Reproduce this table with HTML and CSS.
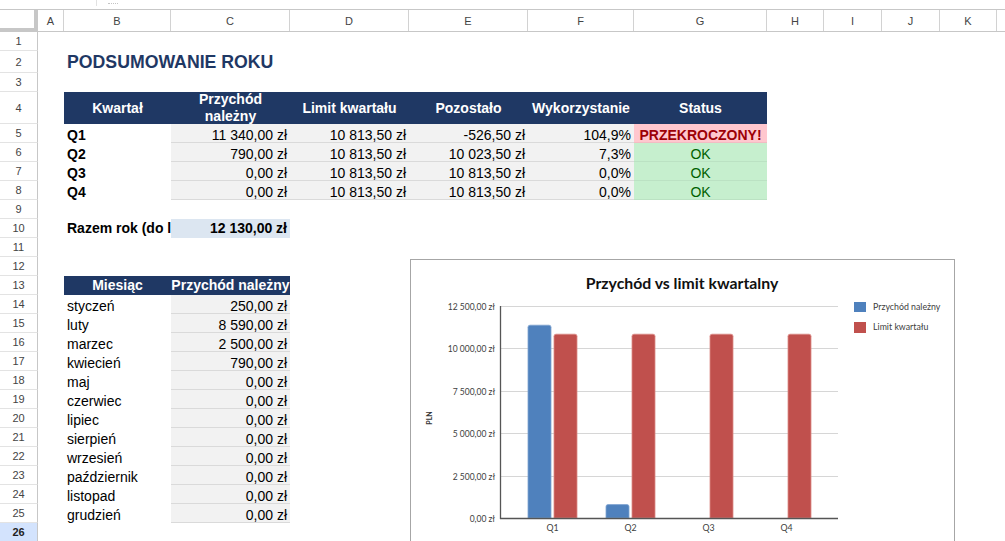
FILE: index.html
```html
<!DOCTYPE html>
<html lang="pl">
<head>
<meta charset="utf-8">
<title>Podsumowanie roku</title>
<link rel="stylesheet" href="styles.css">
</head>
<body>
<div class="app">
  <div class="topbar"><span class="tb-sep"></span><span class="tb-mark"></span></div>
  <div class="sheet">
    <div class="row colhdr">
      <div class="corner"></div>
      <div class="ch">A</div><div class="ch">B</div><div class="ch">C</div><div class="ch">D</div>
      <div class="ch">E</div><div class="ch">F</div><div class="ch">G</div><div class="ch">H</div>
      <div class="ch">I</div><div class="ch">J</div><div class="ch">K</div><div class="ch"></div>
    </div>
    <div class="row"><div class="rh">1</div></div>
    <div class="row r2"><div class="rh">2</div><div class="cell cB title">PODSUMOWANIE ROKU</div></div>
    <div class="row"><div class="rh">3</div></div>
    <div class="row r4">
      <div class="rh">4</div>
      <div class="cell cB hd">Kwartał</div>
      <div class="cell cC hd">Przychód<br>należny</div>
      <div class="cell cD hd">Limit kwartału</div>
      <div class="cell cE hd">Pozostało</div>
      <div class="cell cF hd">Wykorzystanie</div>
      <div class="cell cG hd">Status</div>
    </div>
    <div class="row">
      <div class="rh">5</div>
      <div class="cell cB lbl">Q1</div>
      <div class="cell cC num">11 340,00 zł</div>
      <div class="cell cD num">10 813,50 zł</div>
      <div class="cell cE num">-526,50 zł</div>
      <div class="cell cF num">104,9%</div>
      <div class="cell cG bad">PRZEKROCZONY!</div>
    </div>
    <div class="row">
      <div class="rh">6</div>
      <div class="cell cB lbl">Q2</div>
      <div class="cell cC num">790,00 zł</div>
      <div class="cell cD num">10 813,50 zł</div>
      <div class="cell cE num">10 023,50 zł</div>
      <div class="cell cF num">7,3%</div>
      <div class="cell cG ok">OK</div>
    </div>
    <div class="row">
      <div class="rh">7</div>
      <div class="cell cB lbl">Q3</div>
      <div class="cell cC num">0,00 zł</div>
      <div class="cell cD num">10 813,50 zł</div>
      <div class="cell cE num">10 813,50 zł</div>
      <div class="cell cF num">0,0%</div>
      <div class="cell cG ok">OK</div>
    </div>
    <div class="row">
      <div class="rh">8</div>
      <div class="cell cB lbl">Q4</div>
      <div class="cell cC num">0,00 zł</div>
      <div class="cell cD num">10 813,50 zł</div>
      <div class="cell cE num">10 813,50 zł</div>
      <div class="cell cF num">0,0%</div>
      <div class="cell cG ok">OK</div>
    </div>
    <div class="row"><div class="rh">9</div></div>
    <div class="row">
      <div class="rh">10</div>
      <div class="cell cB tlabel">Razem rok (do l</div>
      <div class="cell cC total">12 130,00 zł</div>
    </div>
    <div class="row"><div class="rh">11</div></div>
    <div class="row"><div class="rh">12</div></div>
    <div class="row">
      <div class="rh">13</div>
      <div class="cell cB hd">Miesiąc</div>
      <div class="cell cC hd tight">Przychód należny</div>
    </div>
    <div class="row"><div class="rh">14</div><div class="cell cB">styczeń</div><div class="cell cC num">250,00 zł</div></div>
    <div class="row"><div class="rh">15</div><div class="cell cB">luty</div><div class="cell cC num">8 590,00 zł</div></div>
    <div class="row"><div class="rh">16</div><div class="cell cB">marzec</div><div class="cell cC num">2 500,00 zł</div></div>
    <div class="row"><div class="rh">17</div><div class="cell cB">kwiecień</div><div class="cell cC num">790,00 zł</div></div>
    <div class="row"><div class="rh">18</div><div class="cell cB">maj</div><div class="cell cC num">0,00 zł</div></div>
    <div class="row"><div class="rh">19</div><div class="cell cB">czerwiec</div><div class="cell cC num">0,00 zł</div></div>
    <div class="row"><div class="rh">20</div><div class="cell cB">lipiec</div><div class="cell cC num">0,00 zł</div></div>
    <div class="row"><div class="rh">21</div><div class="cell cB">sierpień</div><div class="cell cC num">0,00 zł</div></div>
    <div class="row"><div class="rh">22</div><div class="cell cB">wrzesień</div><div class="cell cC num">0,00 zł</div></div>
    <div class="row"><div class="rh">23</div><div class="cell cB">październik</div><div class="cell cC num">0,00 zł</div></div>
    <div class="row"><div class="rh">24</div><div class="cell cB">listopad</div><div class="cell cC num">0,00 zł</div></div>
    <div class="row"><div class="rh">25</div><div class="cell cB">grudzień</div><div class="cell cC num">0,00 zł</div></div>
    <div class="row"><div class="rh sel">26</div></div>
  </div>

  <div class="chart">
    <svg class="chart-svg" width="543" height="300" viewBox="0 0 543 300">
      <text class="c-title" x="271" y="28.5" text-anchor="middle">Przychód vs limit kwartalny</text>
      <g class="c-grid">
        <line x1="89" y1="46.5" x2="427" y2="46.5"/>
        <line x1="89" y1="88.5" x2="427" y2="88.5"/>
        <line x1="89" y1="131.5" x2="427" y2="131.5"/>
        <line x1="89" y1="173.5" x2="427" y2="173.5"/>
        <line x1="89" y1="216.5" x2="427" y2="216.5"/>
      </g>
      <g class="c-blue">
        <path d="M117 258 V67.2 Q117 65.2 119 65.2 H138 Q140 65.2 140 67.2 V258 Z"/>
        <path d="M195 258 V246.6 Q195 244.6 197 244.6 H216 Q218 244.6 218 246.6 V258 Z"/>
      </g>
      <g class="c-red">
        <path d="M143 258 V76.2 Q143 74.2 145 74.2 H164 Q166 74.2 166 76.2 V258 Z"/>
        <path d="M221 258 V76.2 Q221 74.2 223 74.2 H242 Q244 74.2 244 76.2 V258 Z"/>
        <path d="M299 258 V76.2 Q299 74.2 301 74.2 H320 Q322 74.2 322 76.2 V258 Z"/>
        <path d="M377 258 V76.2 Q377 74.2 379 74.2 H398 Q400 74.2 400 76.2 V258 Z"/>
      </g>
      <g class="c-axis">
        <line x1="89.5" y1="46" x2="89.5" y2="259"/>
        <line x1="89" y1="258.5" x2="427" y2="258.5"/>
      </g>
      <g class="c-ylab">
        <text x="84" y="50">12 500,00 zł</text>
        <text x="84" y="92">10 000,00 zł</text>
        <text x="84" y="135">7 500,00 zł</text>
        <text x="84" y="177">5 000,00 zł</text>
        <text x="84" y="219.5">2 500,00 zł</text>
        <text x="84" y="261.5">0,00 zł</text>
      </g>
      <text class="c-pln" transform="translate(21 158) rotate(-90)" text-anchor="middle">PLN</text>
      <g class="c-xlab">
        <text x="141.5" y="271">Q1</text>
        <text x="219.5" y="271">Q2</text>
        <text x="297.5" y="271">Q3</text>
        <text x="375.5" y="271">Q4</text>
      </g>
      <rect class="lg-blue" x="443" y="42" width="12" height="10"/>
      <rect class="lg-red" x="443" y="62" width="12" height="11"/>
      <text class="c-leg" x="462" y="50">Przychód należny</text>
      <text class="c-leg" x="462" y="70">Limit kwartału</text>
    </svg>
  </div>
</div>
</body>
</html>
```

FILE: styles.css
```css
* {
  box-sizing: border-box;
  margin: 0;
  padding: 0;
}

html, body {
  width: 1005px;
  height: 541px;
  overflow: hidden;
  background: #fff;
}

body {
  font-family: "Liberation Sans", Arial, sans-serif;
  color: #000;
}

.app {
  position: relative;
  width: 1005px;
  height: 541px;
  overflow: hidden;
}

/* remnant of the formula bar */
.topbar {
  height: 9px;
  display: flex;
  align-items: flex-start;
}

.tb-sep {
  margin-left: 96px;
  width: 1px;
  height: 6px;
  background: #e2e2e2;
}

.tb-mark {
  margin-left: 11px;
  width: 10px;
  height: 3px;
  margin-top: 1px;
  border-bottom: 1px dotted #c4c4c4;
}

.sheet {
  width: 1054px;
}

.row {
  display: grid;
  grid-template-columns: 38px 26px 107px 119px 119px 119px 106px 133px 57px 58px 58px 57px 57px;
  height: 19px;
}

.r2 { height: 22px; }
.r4 { height: 32px; }

.colhdr {
  height: 23px;
  border-top: 1px solid #c7c7c7;
  border-bottom: 1px solid #c7c7c7;
}

.corner {
  border-right: 4px solid #c7c7c7;
  border-bottom: 3px solid #c7c7c7;
}

.ch {
  display: flex;
  align-items: center;
  justify-content: center;
  border-right: 1px solid #d2d2d2;
  font-size: 11px;
  color: #444;
}

.rh {
  grid-column: 1;
  display: flex;
  align-items: center;
  justify-content: center;
  border-right: 1px solid #c7c7c7;
  border-bottom: 1px solid #e3e3e3;
  font-size: 11px;
  color: #444;
}

.rh.sel {
  background: #d3e3fd;
  font-weight: bold;
  color: #1f1f1f;
}

.cell {
  grid-row: 1;
  display: flex;
  align-items: flex-end;
  padding: 0 3px;
  font-size: 14px;
  line-height: 15px;
  white-space: nowrap;
  overflow: hidden;
}

.cB { grid-column: 3; }
.cC { grid-column: 4; }
.cD { grid-column: 5; }
.cE { grid-column: 6; }
.cF { grid-column: 7; }
.cG { grid-column: 8; }

.title {
  overflow: visible;
  align-items: center;
  font-size: 17.7px;
  line-height: 20px;
  font-weight: bold;
  color: #1f3864;
}

.hd {
  background: #1f3864;
  color: #fff;
  font-weight: bold;
  justify-content: center;
  align-items: center;
  text-align: center;
  line-height: 17px;
}

.hd.tight {
  padding: 0;
}

.lbl {
  font-weight: bold;
}

.num {
  background: #f2f2f2;
  justify-content: flex-end;
  box-shadow: inset 0 -1px 0 #dadada;
}

.bad {
  background: #ffc7ce;
  color: #9c0006;
  font-weight: bold;
  justify-content: center;
  box-shadow: inset 0 -1px 0 rgba(0, 0, 0, 0.05);
}

.ok {
  background: #c6efce;
  color: #006100;
  justify-content: center;
  box-shadow: inset 0 -1px 0 rgba(0, 0, 0, 0.05);
}

.tlabel {
  font-weight: bold;
  align-items: center;
}

.total {
  background: #dce6f1;
  font-weight: bold;
  justify-content: flex-end;
  align-items: center;
}

/* chart floating over the sheet */
.chart {
  position: absolute;
  left: 410px;
  top: 259px;
  width: 545px;
  height: 302px;
  background: #fff;
  border: 1px solid #a6a6a6;
}

.chart-svg {
  display: block;
  font-family: Lato, "Liberation Sans", sans-serif;
}

.c-title {
  font-size: 15.8px;
  font-weight: bold;
  fill: #111;
}

.c-grid line {
  stroke: #d6d6d6;
  stroke-width: 1;
}

.c-axis line {
  stroke: #555;
  stroke-width: 1.3;
}

.c-blue path {
  fill: #4f81bd;
  stroke: #7fa3d1;
  stroke-width: 0.8;
}

.c-red path {
  fill: #c0504d;
  stroke: #dc8a87;
  stroke-width: 0.8;
}

.c-ylab text {
  font-size: 8.5px;
  fill: #404040;
  text-anchor: end;
}

.c-xlab text {
  font-size: 8.8px;
  fill: #404040;
  text-anchor: middle;
}

.c-pln {
  font-size: 7px;
  font-weight: bold;
  fill: #333;
}

.lg-blue { fill: #4f81bd; }
.lg-red { fill: #c0504d; }

.c-leg {
  font-size: 8.8px;
  fill: #404040;
}
```
